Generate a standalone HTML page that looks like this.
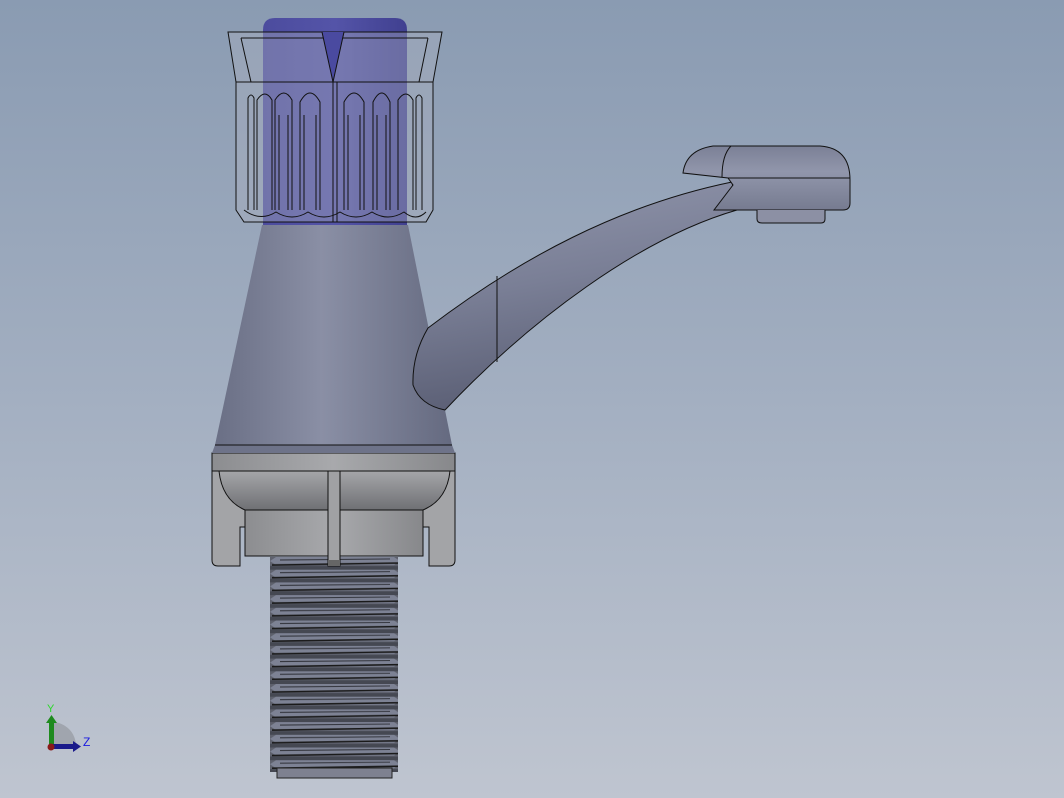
<!DOCTYPE html>
<html><head><meta charset="utf-8"><style>
html,body{margin:0;padding:0;width:1064px;height:798px;overflow:hidden}
body{background:linear-gradient(180deg,#8a9bb2 0%,#a3afc1 50%,#bfc5d0 100%)}
svg{position:absolute;left:0;top:0}
</style></head><body>
<svg width="1064" height="798" viewBox="0 0 1064 798" xmlns="http://www.w3.org/2000/svg">
<defs>
<linearGradient id="cone" x1="0" x2="1" y1="0" y2="0">
<stop offset="0" stop-color="#6a6f85"/><stop offset="0.45" stop-color="#8a8fa5"/><stop offset="1" stop-color="#656a80"/></linearGradient>
<linearGradient id="blue" x1="0" x2="1" y1="0" y2="0">
<stop offset="0" stop-color="#4c4c9e"/><stop offset="0.5" stop-color="#5454a8"/><stop offset="1" stop-color="#404090"/></linearGradient>
<linearGradient id="grey" x1="0" x2="1" y1="0" y2="0">
<stop offset="0" stop-color="#8c8d90"/><stop offset="0.5" stop-color="#a8a9ac"/><stop offset="1" stop-color="#87888b"/></linearGradient>
<linearGradient id="dome" x1="0" x2="0" y1="0" y2="1">
<stop offset="0" stop-color="#a5a6a9"/><stop offset="1" stop-color="#6f7074"/></linearGradient>
<linearGradient id="spout" x1="0" x2="0.25" y1="0" y2="1">
<stop offset="0" stop-color="#9297ad"/><stop offset="0.5" stop-color="#7a7f96"/><stop offset="1" stop-color="#5a5e74"/></linearGradient>
<linearGradient id="head" x1="0" x2="0" y1="0" y2="1">
<stop offset="0" stop-color="#7b8096"/><stop offset="0.4" stop-color="#9196ab"/><stop offset="1" stop-color="#767b90"/></linearGradient>
<pattern id="thr" x="270" y="557" width="130" height="12.7" patternUnits="userSpaceOnUse">
<rect width="130" height="12.7" fill="#5e616d"/>
<polygon points="0,4 6,0 124,0 130,4 124,8 6,8" fill="#7d8294"/>
<line x1="2" y1="8" x2="128" y2="6" stroke="#1a1a1a" stroke-width="1.6"/>
<line x1="10" y1="3" x2="120" y2="2" stroke="#33353d" stroke-width="1"/>
<rect y="9" width="130" height="3.7" fill="#454852"/>
</pattern>
</defs>

<rect x="270" y="557" width="128" height="215" fill="url(#thr)"/>
<rect x="277" y="768" width="115" height="10" fill="#7e8190" stroke="#222" stroke-width="1"/>

<rect x="245" y="510" width="178" height="46" fill="url(#grey)" stroke="#111" stroke-width="1"/>
<path d="M212,471 H245 V527 H240 V566 H218 Q212,566 212,560 Z" fill="#a3a4a7" stroke="#111" stroke-width="1"/>
<path d="M423,471 H455 V560 Q455,566 449,566 H429 V527 H423 Z" fill="#a3a4a7" stroke="#111" stroke-width="1"/>
<path d="M219,471 H450 Q447,500 423,510 H245 Q222,500 219,471 Z" fill="url(#dome)" stroke="#111" stroke-width="1"/>
<rect x="328" y="471" width="12" height="95" fill="#a0a1a4" stroke="#111" stroke-width="1"/>
<rect x="328" y="560" width="12" height="6" fill="#666"/>
<rect x="212" y="453" width="243" height="18" fill="url(#grey)" stroke="#111" stroke-width="1"/>

<path d="M262,225 H408 L452,445 H215 Z" fill="url(#cone)"/>
<path d="M215,445 H452 L455,453 H212 Z" fill="#6e7389"/>
<line x1="215" y1="445" x2="452" y2="445" stroke="#111"/>

<path d="M428,328 C520,258 620,205 732,182 L737,210 C640,238 530,320 445,410 Q420,405 413,385 Q412,355 428,328 Z" fill="url(#spout)" stroke="#111" stroke-width="1"/>
<line x1="497" y1="276" x2="497" y2="362" stroke="#111" stroke-width="1"/>
<path d="M683,173 Q686,150 713,146 H820 Q850,148 850,180 V203 Q850,210 843,210 H714 L733,185 L728,178 L683,173 Z" fill="url(#head)" stroke="#111" stroke-width="1"/>
<line x1="728" y1="178" x2="850" y2="178" stroke="#111"/>
<path d="M731,146 Q722,155 722,177" fill="none" stroke="#111"/>
<path d="M757,210 V219 Q757,223 762,223 H821 Q825,223 825,219 V210" fill="#8c90a4" stroke="#111"/>

<path d="M263,225 V30 Q263,18 275,18 H395 Q407,18 407,30 V225 Z" fill="url(#blue)"/>
<path d="M228,32 H442 L433,82 V210 L426,222 H244 L236,210 V82 Z" fill="rgba(170,175,190,0.4)" stroke="#111" stroke-width="1"/>
<line x1="236" y1="82" x2="433" y2="82" stroke="#111"/>
<path d="M241,38 H428 M241,38 L251,82 M428,38 L419,82" fill="none" stroke="#111"/>
<path d="M322,32 L333,82 L344,32" fill="#4a4aa0" stroke="#111"/>
<line x1="333" y1="82" x2="333" y2="222" stroke="#111"/>
<line x1="337" y1="82" x2="337" y2="222" stroke="#111"/>
<g fill="none" stroke="#111" stroke-width="1">
<path d="M248,210 V98 Q251,92 254,98 V210"/>
<path d="M257,210 V100 Q265,88 272,100 V210"/>
<path d="M275,210 V100 Q284,86 292,100 V210 M279,115 V210 M288,115 V210"/>
<path d="M300,210 V102 Q310,84 320,102 V210 M304,115 V210 M316,115 V210"/>
<path d="M344,210 V102 Q354,84 364,102 V210 M348,115 V210 M360,115 V210"/>
<path d="M373,210 V102 Q382,84 390,102 V210 M377,115 V210 M386,115 V210"/>
<path d="M398,210 V100 Q406,88 413,100 V210"/>
<path d="M416,210 V98 Q419,92 422,98 V210"/>
<path d="M244,210 Q260,222 276,212 Q292,222 308,212 Q324,222 340,212 Q356,222 372,212 Q388,222 404,212 Q416,222 426,212"/>
</g>
<line x1="244" y1="222" x2="426" y2="222" stroke="#111"/>

<path d="M52,746 V722 A24,24 0 0 1 76,746 Z" fill="#9a9ea6" opacity="0.8"/>
<rect x="49" y="722" width="5" height="24" fill="#1e8a1e"/>
<polygon points="46,723 51.5,715 57,723" fill="#1e8a1e"/>
<rect x="52" y="744" width="22" height="5" fill="#1a1a8a"/>
<polygon points="73,741 81,746.5 73,752" fill="#1a1a8a"/>
<circle cx="51" cy="747" r="3.5" fill="#8a1a1a"/>
<text x="47" y="712" font-family="Liberation Sans,sans-serif" font-size="11" fill="#2ad82a">Y</text>
<text x="83" y="746" font-family="Liberation Sans,sans-serif" font-size="12" fill="#1a1ae0">Z</text>
</svg>
</body></html>
